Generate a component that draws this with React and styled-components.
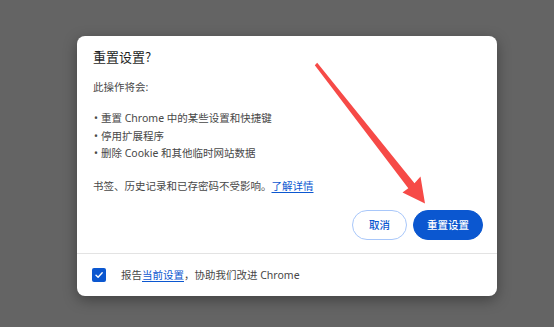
import React from "react";
import styled, { createGlobalStyle } from "styled-components";

const Global = createGlobalStyle`
  html, body { margin: 0; padding: 0; }
  body {
    background: #646464;
    font-family: "Noto Sans", "Noto Sans CJK SC", sans-serif;
  }
`;

const Backdrop = styled.div`
  position: relative;
  width: 554px;
  height: 327px;
  box-sizing: border-box;
  padding: 36px 0 0 77px;
  background: #646464;
  overflow: hidden;
`;

const Dialog = styled.div`
  width: 420px;
  height: 260px;
  box-sizing: border-box;
  background: #ffffff;
  border-radius: 8px;
  box-shadow: 0 4px 14px rgba(0, 0, 0, 0.35);
  display: flex;
  flex-direction: column;
`;

const Main = styled.div`
  padding: 12px 14px 0 16px;
  display: flex;
  flex-direction: column;
`;

const Title = styled.h2`
  margin: 0;
  font-size: 13px;
  font-weight: 400;
  line-height: 18px;
  color: #1f1f1f;
  font-family: "Noto Sans CJK SC", sans-serif;
`;

const Paragraph = styled.p`
  margin: ${(p) => p.$top}px 0 0;
  font-size: 10.5px;
  line-height: 18px;
  color: #474747;
  font-family: "Noto Sans", "Noto Sans CJK SC", sans-serif;
`;

const List = styled.ul`
  margin: 14px 0 0;
  padding: 0;
  list-style: none;
`;

const Item = styled.li`
  font-size: 10.5px;
  line-height: 17.5px;
  color: #474747;
  font-family: "Noto Sans", "Noto Sans CJK SC", sans-serif;
  display: flex;
  &::before {
    content: "•";
    width: 7px;
    margin-left: 1px;
  }
`;

const Link = styled.a`
  color: #0b57d0;
  text-decoration: underline;
  text-underline-offset: 2px;
  cursor: pointer;
`;

const Actions = styled.div`
  display: flex;
  justify-content: flex-end;
  gap: 6px;
  margin-top: 15px;
`;

const Button = styled.button`
  height: 30px;
  box-sizing: border-box;
  padding: 0 ${(p) => (p.$primary ? 13 : 16)}px;
  border-radius: 15px;
  font-size: 10.5px;
  font-family: "Noto Sans CJK SC", sans-serif;
  font-weight: 500;
  border: 1px solid ${(p) => (p.$primary ? "#0b57d0" : "#a8c7fa")};
  background: ${(p) => (p.$primary ? "#0b57d0" : "#ffffff")};
  color: ${(p) => (p.$primary ? "#ffffff" : "#0b57d0")};
  cursor: pointer;
`;

const Footer = styled.div`
  margin-top: 13px;
  border-top: 1px solid #e3e3e3;
  flex: 1;
  display: flex;
  align-items: center;
  padding: 0 16px 0 15px;
  gap: 15px;
`;

const Check = styled.span`
  width: 14px;
  height: 14px;
  border-radius: 2px;
  background: #0b57d0;
  display: flex;
  align-items: center;
  justify-content: center;
  flex: none;
`;

const FooterText = styled.span`
  font-size: 10.5px;
  line-height: 18px;
  color: #474747;
  font-family: "Noto Sans", "Noto Sans CJK SC", sans-serif;
`;

const Arrow = styled.svg`
  position: absolute;
  left: 0;
  top: 0;
  pointer-events: none;
`;

export default function App() {
  return (
    <>
      <Global />
      <Backdrop>
        <Dialog>
          <Main>
            <Title>重置设置?</Title>
            <Paragraph $top={12}>此操作将会:</Paragraph>
            <List>
              <Item>重置 Chrome 中的某些设置和快捷键</Item>
              <Item>停用扩展程序</Item>
              <Item>删除 Cookie 和其他临时网站数据</Item>
            </List>
            <Paragraph $top={14}>
              书签、历史记录和已存密码不受影响。<Link>了解详情</Link>
            </Paragraph>
            <Actions>
              <Button>取消</Button>
              <Button $primary>重置设置</Button>
            </Actions>
          </Main>
          <Footer>
            <Check>
              <svg width="10" height="10" viewBox="0 0 10 10">
                <path d="M2 5.2 L4.1 7.2 L8.2 2.8" fill="none" stroke="#fff" strokeWidth="1.4" strokeLinecap="round" strokeLinejoin="round" />
              </svg>
            </Check>
            <FooterText>
              报告<Link>当前设置</Link>，协助我们改进 Chrome
            </FooterText>
          </Footer>
        </Dialog>
        <Arrow width="554" height="327" viewBox="0 0 554 327">
          <polygon
            points="314.8,65.2 317.2,62.8 414.5,183.2 420.5,176.5 425,203.5 402.5,192.5 408.3,188.2"
            fill="#f64a47"
          />
        </Arrow>
      </Backdrop>
    </>
  );
}
